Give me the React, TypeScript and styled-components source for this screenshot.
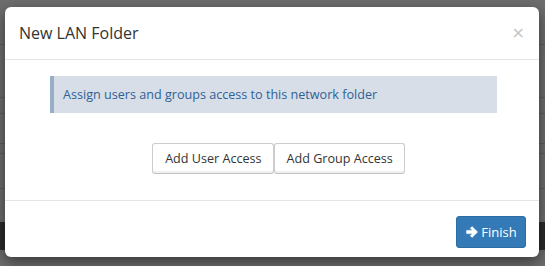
import React from "react";
import styled, { createGlobalStyle } from "styled-components";

const Global = createGlobalStyle`
  html, body { margin: 0; padding: 0; }
  body {
    width: 545px;
    height: 266px;
    overflow: hidden;
    background: #6e6e6e;
    font-family: "Open Sans", "Noto Sans", sans-serif;
  }
  * { box-sizing: border-box; }
`;

const Page = styled.div`
  position: relative;
  width: 545px;
  height: 266px;
  display: flex;
  flex-direction: column;
`;

const Gap = styled.div<{ $h: number }>`
  height: ${(p) => p.$h}px;
  flex: none;
`;

const Line = styled.div`
  height: 1px;
  flex: none;
  background: #5e5e5e;
`;

const DarkBar = styled.div`
  height: 28px;
  flex: none;
  background: #2b2b2b;
`;

const Modal = styled.div`
  position: absolute;
  left: 5px;
  top: 7px;
  width: 534px;
  height: 250px;
  background: #fff;
  border-radius: 6px;
  box-shadow: 0 5px 15px rgba(0, 0, 0, 0.5);
  display: flex;
  flex-direction: column;
`;

const Header = styled.div`
  display: flex;
  align-items: center;
  justify-content: space-between;
  height: 53px;
  padding: 0 14px 0 14px;
  border-bottom: 1px solid #e5e5e5;
`;

const Title = styled.h4`
  margin: 0;
  font-size: 16px;
  font-weight: 400;
  color: #333;
  line-height: 24px;
`;

const Close = styled.button`
  border: 0;
  background: none;
  padding: 0;
  font-family: "DejaVu Sans", sans-serif;
  font-size: 16px;
  font-weight: 400;
  line-height: 1;
  color: #c4c4c4;
  cursor: pointer;
`;

const Body = styled.div`
  height: 141px;
  padding: 16px 42px 0 45px;
  display: flex;
  flex-direction: column;
  align-items: stretch;
  border-bottom: 1px solid #e5e5e5;
`;

const Info = styled.div`
  height: 37px;
  background: #d7dee7;
  border-left: 4px solid #98afc6;
  padding: 0 0 0 9px;
  display: flex;
  align-items: center;
  font-size: 12.6px;
  color: #2f6196;
`;

const ButtonRow = styled.div`
  margin-top: 30px;
  display: flex;
  justify-content: center;
  padding-left: 10px;
  gap: 0;
`;

const DefaultButton = styled.button`
  height: 31px;
  padding: 0 11px 0 12px;
  background: #fff;
  border: 1px solid #ccc;
  border-bottom-color: #c2c2c2;
  box-shadow: inset 0 -2px 0 #f0f0f0;
  border-radius: 3px;
  font-family: "Open Sans", "Noto Sans", sans-serif;
  font-size: 12.6px;
  color: #333;
  cursor: pointer;
`;

const Footer = styled.div`
  flex: 1;
  display: flex;
  justify-content: flex-end;
  align-items: flex-start;
  padding: 15px 13px 0 0;
`;

const PrimaryButton = styled.button`
  width: 70px;
  height: 32px;
  display: flex;
  align-items: center;
  justify-content: center;
  gap: 3px;
  padding: 0 0 0 1px;
  background: #337ab7;
  border: 1px solid #2e6da4;
  border-radius: 3px;
  color: #fff;
  font-family: "Open Sans", "Noto Sans", sans-serif;
  font-size: 13px;
  cursor: pointer;
`;

const Arrow = () => (
  <svg width="12" height="12" viewBox="0 0 12 12" aria-hidden="true">
    <path
      d="M6 0.6 L11.6 6 L6 11.4 L4.3 9.7 L6.5 7.6 L0.6 7.6 L0.6 4.4 L6.5 4.4 L4.3 2.3 Z"
      fill="#fff"
      stroke="#fff"
      strokeWidth="0.6"
      strokeLinejoin="round"
    />
  </svg>
);

export default function App() {
  return (
    <>
      <Global />
      <Page>
        <Gap $h={44} />
        <Line />
        <Gap $h={52} />
        <Line />
        <Gap $h={15} />
        <Line />
        <Gap $h={29} />
        <Line />
        <Gap $h={9} />
        <Line />
        <Gap $h={34} />
        <Line />
        <Gap $h={33} />
        <DarkBar />
        <Modal>
          <Header>
            <Title>New LAN Folder</Title>
            <Close aria-label="Close">×</Close>
          </Header>
          <Body>
            <Info>Assign users and groups access to this network folder</Info>
            <ButtonRow>
              <DefaultButton>Add User Access</DefaultButton>
              <DefaultButton>Add Group Access</DefaultButton>
            </ButtonRow>
          </Body>
          <Footer>
            <PrimaryButton>
              <Arrow />
              Finish
            </PrimaryButton>
          </Footer>
        </Modal>
      </Page>
    </>
  );
}
